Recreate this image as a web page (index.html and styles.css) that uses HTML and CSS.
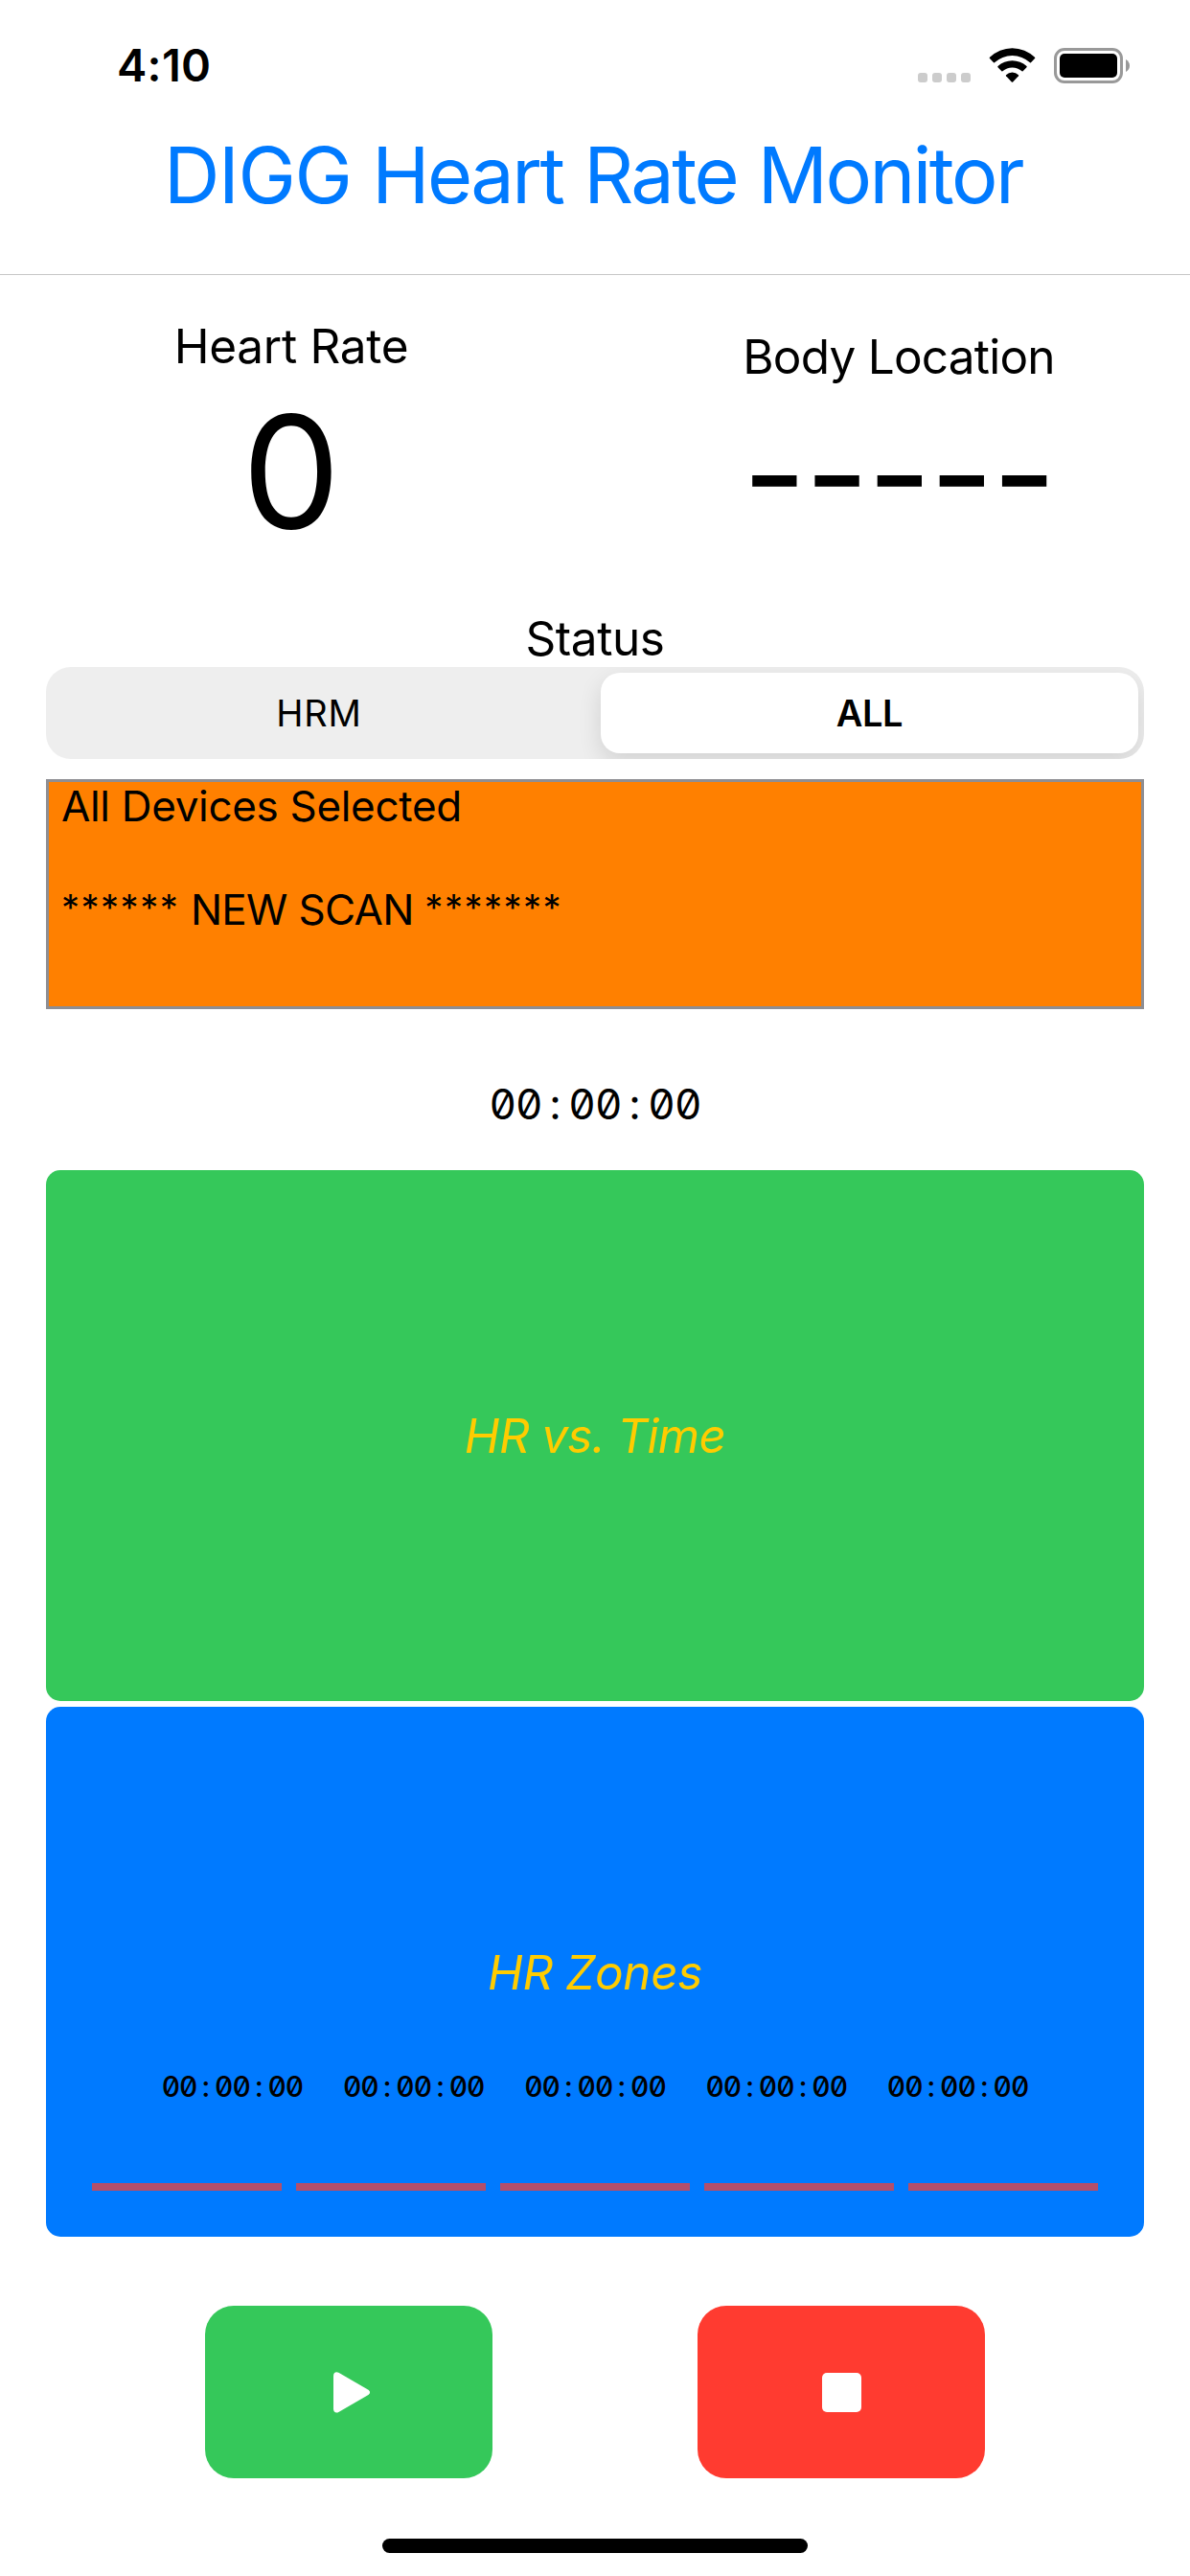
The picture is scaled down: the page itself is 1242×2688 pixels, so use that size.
FILE: index.html
```html
<!DOCTYPE html>
<html lang="en">
<head>
<meta charset="utf-8">
<title>DIGG Heart Rate Monitor</title>
<link rel="stylesheet" href="styles.css">
</head>
<body>
<div class="statusbar">
  <span class="clock">4:10</span>
  <div class="indicators">
    <svg class="cellular" width="55" height="10" viewBox="0 0 55 10" fill="#ccc">
      <rect width="10" height="10" rx="3"/><rect x="15" width="10" height="10" rx="3"/><rect x="30" width="10" height="10" rx="3"/><rect x="45" width="10" height="10" rx="3"/>
    </svg>
    <svg class="wifi" width="49" height="37" viewBox="0 0 49 37">
      <path d="M1 9.8A33.5 33.5 0 0 1 48 9.8Q48.6 10.4 48 11L44 15.3Q43.5 15.7 43 15.3A27.4 27.4 0 0 0 6 15.3Q5.5 15.7 5 15.3L1 11Q.4 10.4 1 9.8Z"/>
      <path d="M9.5 19.1A22 22 0 0 1 39.5 19.1Q40 19.7 39.5 20.2L35.6 24.3Q35.1 24.7 34.6 24.3A15 15 0 0 0 14.4 24.3Q13.9 24.7 13.4 24.3L9.5 20.2Q9 19.7 9.5 19.1Z"/>
      <path d="M18 28.2A9.4 9.4 0 0 1 31 28.2Q31.4 28.7 31 29.2L25.2 35.5Q24.5 36.2 23.8 35.5L18 29.2Q17.6 28.7 18 28.2Z"/>
    </svg>
    <svg class="battery" width="79" height="37" viewBox="0 0 79 37">
      <rect x="1.5" y="1.5" width="69" height="34" rx="9.5" fill="none" stroke="#999" stroke-width="3"/>
      <rect x="6" y="6" width="60" height="25" rx="5"/>
      <path d="M75 12Q79 14.5 79 18.5T75 25Z" fill="#999"/>
    </svg>
  </div>
</div>
<header class="navbar"><h1 class="title"><span class="brand">DIGG</span> Heart Rate Monitor</h1></header>

<section class="metrics">
  <div class="metric">
    <div class="label label-rate">Heart Rate</div>
    <div class="rate">0</div>
  </div>
  <div class="metric metric-location">
    <div class="label label-location">Body Location</div>
    <div class="location">-----</div>
  </div>
</section>

<main class="content">
  <div class="label label-status">Status</div>
  <div class="segmented">
    <div class="segment">HRM</div>
    <div class="segment segment-selected">ALL</div>
  </div>
  <div class="log">
    <div class="log-text">
      <p class="log-line">All Devices Selected</p>
      <p class="log-line">&nbsp;</p>
      <p class="log-line log-scan"><span class="stars">******</span> NEW SCAN <span class="stars">*******</span></p>
    </div>
  </div>
  <div class="timer">00<i>:</i>00<i>:</i>00</div>
  <div class="card card-time"><span class="card-label">HR vs. Time</span></div>
  <div class="card card-zones">
    <span class="card-label card-label-zones">HR Zones</span>
    <div class="zones">
      <div class="zone-times">
        <span class="zone-time">00<i>:</i>00<i>:</i>00</span>
        <span class="zone-time">00<i>:</i>00<i>:</i>00</span>
        <span class="zone-time">00<i>:</i>00<i>:</i>00</span>
        <span class="zone-time">00<i>:</i>00<i>:</i>00</span>
        <span class="zone-time">00<i>:</i>00<i>:</i>00</span>
      </div>
      <div class="zone-bars">
        <div class="zone-bar"></div><div class="zone-bar"></div><div class="zone-bar"></div><div class="zone-bar"></div><div class="zone-bar"></div>
      </div>
    </div>
  </div>
</main>

<div class="controls">
  <button class="control control-play" aria-label="Start">
    <svg width="38" height="43" viewBox="0 0 38 43" fill="#fff"><path d="M0 4.2C0 .8 2.6-.8 5.4.8L36 18.6C38.7 20.2 38.7 22.6 36 24.2L5.4 42C2.6 43.6 0 42 0 38.6Z"/></svg>
  </button>
  <button class="control control-stop" aria-label="Stop">
    <svg width="41" height="41" viewBox="0 0 41 41" fill="#fff"><rect width="41" height="41" rx="5"/></svg>
  </button>
</div>
<div class="home-indicator"></div>
</body>
</html>
```
FILE: styles.css
```css
* { box-sizing: border-box; }

body {
  margin: 0;
  width: 1242px;
  height: 2688px;
  background: #fff;
  color: #000;
  font-family: Inter, "Liberation Sans", sans-serif;
  overflow: hidden;
}

/* Status bar */
.statusbar {
  display: flex;
  justify-content: space-between;
  align-items: center;
  height: 136px;
  padding: 0 63px 0 122px;
}
.clock { font-size: 47px; font-weight: 600; letter-spacing: 0.3px; line-height: 60px; }
.indicators { display: flex; align-items: flex-end; gap: 19px; height: 37px; }
.cellular { margin-bottom: 1px; }

/* Title */
.navbar { height: 151px; padding-top: 1px; border-bottom: 1px solid #c6c6c6; }
.title {
  margin: 0;
  padding-right: 4px;
  font-size: 81px;
  font-weight: 400;
  line-height: 93px;
  letter-spacing: -2.55px;
  word-spacing: 1.5px;
  text-align: center;
  color: #007aff;
}
.brand { letter-spacing: -1.4px; }

/* Readings */
.metrics { display: flex; justify-content: space-between; height: 349px; padding-top: 44px; }
.metric { width: 608px; text-align: center; }
.metric-location { padding-top: 11px; }
.label { font-size: 49.5px; line-height: 60px; text-align: center; white-space: nowrap; }
.label-rate { letter-spacing: -0.27px; }
.label-location { letter-spacing: -0.77px; }
.label-status { letter-spacing: -0.45px; }
.rate { font-size: 163px; line-height: 201px; }
.location { font-size: 145px; line-height: 186px; letter-spacing: -1.5px; }

.content { padding: 0 48px; }

/* Device filter */
.segmented {
  display: flex;
  height: 96px;
  padding: 6px 6px 6px 0;
  border-radius: 26px;
  background: #eee;
  overflow: hidden;
}
.segment {
  display: flex;
  flex: 1;
  align-items: center;
  justify-content: center;
  padding-right: 9px;
  font-size: 38px;
  letter-spacing: 0.8px;
}
.segment-selected {
  flex: 0 0 561px;
  padding-right: 0;
  border-radius: 20px;
  background: #fff;
  font-weight: 600;
  letter-spacing: -0.4px;
  box-shadow: 0 9px 24px rgba(0, 0, 0, 0.12);
}

/* Scan log */
.log {
  height: 240px;
  margin-top: 21px;
  padding-left: 13px;
  border: 3px solid #8e8e93;
  background: #ff8000;
}
.log-text { margin-top: -2px; }
.log-line { margin: 0; font-size: 44px; line-height: 54px; letter-spacing: -0.32px; }
.log-scan { letter-spacing: -0.7px; }
.stars { font-size: 38px; line-height: 0; vertical-align: 4px; letter-spacing: 1.5px; }

/* Timers: every character takes one fixed-width cell */
.timer, .zone-time { font-feature-settings: "zero", "tnum"; white-space: nowrap; }
.timer i, .zone-time i { display: inline-block; font-style: normal; text-align: center; letter-spacing: 0; }
.timer {
  padding-top: 30px;
  font-size: 44px;
  line-height: 138px;
  letter-spacing: -0.9px;
  text-align: center;
}
.timer i { width: 27.7px; }
.zone-time { font-size: 30px; font-weight: 500; line-height: 40px; letter-spacing: -1px; }
.zone-time i { width: 18.5px; }

/* Charts */
.card { display: grid; border-radius: 15px; }
.card-time { height: 554px; background: #35c85a; }
.card-zones { height: 553px; margin-top: 6px; background: #007aff; }
.card-label {
  grid-area: 1 / 1;
  place-self: center;
  font-size: 49.5px;
  font-style: italic;
  letter-spacing: -0.75px;
  color: #fc0;
}
.card-label-zones { letter-spacing: -0.43px; }
.zones { grid-area: 1 / 1; align-self: end; padding: 0 48px 48px; }
.zone-times { display: flex; justify-content: center; gap: 41.6px; }
.zone-bars { display: flex; gap: 15px; margin-top: 81px; }
.zone-bar { flex: 1; height: 8px; background: #b34f6b; }

/* Transport buttons */
.controls { display: flex; justify-content: center; gap: 214px; margin-top: 72px; }
.control {
  display: flex;
  align-items: center;
  justify-content: center;
  width: 300px;
  height: 180px;
  padding: 1px 0 0;
  border: 0;
  border-radius: 30px;
}
.control-play { padding-left: 6px; background: #35c85a; }
.control-stop { background: #ff3b30; }

.home-indicator { width: 444px; height: 15px; margin: 63px auto 0; border-radius: 8px; background: #000; }
```
